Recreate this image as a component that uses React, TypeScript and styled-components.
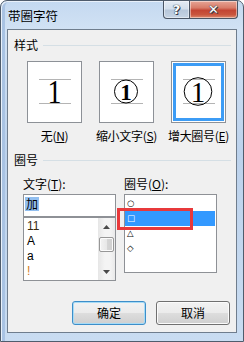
import React from 'react';
import styled, { createGlobalStyle } from 'styled-components';

const GlobalStyle = createGlobalStyle`
  html, body { margin: 0; padding: 0; background: #ffffff; }
  body { font-family: "Noto Sans CJK SC", sans-serif; }
`;

const CJK = `"Noto Sans CJK SC", "Microsoft YaHei", sans-serif`;

// Window frame (Aero glass)
const Window = styled.div`
  width: 244px;
  height: 342px;
  box-sizing: border-box;
  border: 1px solid #4f5c6c;
  border-radius: 7px 7px 0 0;
  background: linear-gradient(180deg, #c4d9f0 0%, #d2e2f4 9%, #bcd2ec 45%, #c9dcf1 100%);
  box-shadow: inset 1px 1px 0 #e9f1fa, inset 4px 0 0 #a9c3e3;
  display: flex;
  flex-direction: column;
  overflow: hidden;
`;

const TitleBar = styled.div`
  height: 28px;
  display: flex;
  align-items: flex-start;
  flex-shrink: 0;
`;

const Title = styled.div`
  padding: 7px 0 0 7px;
  font: 12.5px/16px ${CJK};
  color: #000;
`;

const CaptionButtons = styled.div`
  margin-left: auto;
  margin-right: 5px;
  display: flex;
`;

const CaptionButton = styled.div<{ $close?: boolean }>`
  width: ${p => (p.$close ? 48 : 27)}px;
  height: 18px;
  box-sizing: border-box;
  border: 1px solid #4a5564;
  border-top: none;
  ${p => (p.$close ? 'border-left: none;' : '')}
  border-radius: ${p => (p.$close ? '0 0 4px 0' : '0 0 0 4px')};
  background: ${p =>
    p.$close
      ? 'linear-gradient(180deg, #e6a596 0%, #d87c69 40%, #c34533 55%, #c9553e 80%, #dd8a6d 100%)'
      : 'linear-gradient(180deg, #e3ebf4 0%, #d3dfec 45%, #b7c7da 55%, #c6d4e4 100%)'};
  box-shadow: inset 0 0 0 1px rgba(255, 255, 255, 0.45);
  display: flex;
  align-items: center;
  justify-content: center;
  font: bold 13px/1 "DejaVu Sans", sans-serif;
  color: #ffffff;
  text-shadow: 0 0 1px #2d3440, 0 0 1px #2d3440, 1px 1px 0 #3a4250;
`;

const Client = styled.div`
  position: relative;
  margin: 0 6px 8px 6px;
  flex: 1;
  border: 1px solid #6f7d8d;
  background: #f0f0f0;
  display: flex;
  flex-direction: column;
`;

const SectionHeader = styled.div<{ $top: number }>`
  margin-top: ${p => p.$top}px;
  padding: 0 5px 0 6px;
  height: 16px;
  display: flex;
  align-items: center;
  gap: 5px;
  font: 12px/16px ${CJK};
  color: #000;
`;

const Rule = styled.div`
  flex: 1;
  height: 1px;
  background: #d5dfe5;
`;

const StyleRow = styled.div`
  margin-top: 8px;
  padding-left: 19px;
  display: flex;
  gap: 17px;
`;

const StyleOption = styled.div`
  width: 55px;
  display: flex;
  flex-direction: column;
  align-items: center;
`;

const Preview = styled.div<{ $selected?: boolean }>`
  width: 55px;
  height: 62px;
  box-sizing: border-box;
  border: 1px solid #8d9197;
  background: #ffffff;
  box-shadow: ${p => (p.$selected ? 'inset 0 0 0 1px #ffffff, inset 0 0 0 4px #3c9cf5' : 'none')};
  display: flex;
`;

const OptionLabel = styled.div`
  margin-top: 5px;
  white-space: nowrap;
  font: 12px/16px ${CJK};
  color: #000;
  letter-spacing: -0.3px;
  u { text-decoration-thickness: 1px; text-underline-offset: 1px; }
`;

const Columns = styled.div`
  margin-top: 8px;
  padding-left: 15px;
  display: flex;
  gap: 8px;
`;

const Column = styled.div`
  position: relative;
  width: 93px;
  display: flex;
  flex-direction: column;
`;

const FieldLabel = styled.div`
  font: 12px/16px ${CJK};
  color: #000;
  margin-bottom: 2px;
  u { text-decoration-thickness: 1px; text-underline-offset: 1px; }
`;

const TextBox = styled.div`
  height: 23px;
  box-sizing: border-box;
  border: 1px solid #8e9196;
  background: #ffffff;
  padding: 2px 0 0 1px;
  font: 12px/14px ${CJK};
`;

const Selected = styled.span`
  display: inline-block;
  padding: 0 1px;
  background: #92bff0;
  color: #000;
`;

const ListBox = styled.div<{ $h: number }>`
  height: ${p => p.$h}px;
  box-sizing: border-box;
  border: 1px solid #8e9196;
  background: #ffffff;
  display: flex;
`;

const Items = styled.div<{ $pt: number }>`
  flex: 1;
  padding-top: ${p => p.$pt}px;
  display: flex;
  flex-direction: column;
`;

const Item = styled.div<{ $color?: string }>`
  height: 15px;
  padding-left: 3px;
  font: 12px/15px "Liberation Sans", sans-serif;
  color: ${p => p.$color || '#000'};
`;

const SymbolItem = styled.div<{ $active?: boolean }>`
  height: 15px;
  margin-right: 1px;
  padding-left: 2px;
  font: bold 8.5px/15px "DejaVu Sans", sans-serif;
  color: ${p => (p.$active ? '#ffffff' : '#000')};
  background: ${p => (p.$active ? '#3399ff' : 'transparent')};
`;

const ScrollBar = styled.div`
  width: 17px;
  display: flex;
  flex-direction: column;
  background: linear-gradient(90deg, #e6e6e6, #f4f4f4 40%, #f4f4f4 70%, #e9e9e9);
`;

const ArrowButton = styled.div`
  height: 17px;
  display: flex;
  align-items: center;
  justify-content: center;
`;

const Track = styled.div`
  flex: 1;
  padding-top: 2px;
`;

const Thumb = styled.div`
  margin: 0 1px;
  height: 15px;
  box-sizing: border-box;
  border: 1px solid #979797;
  border-radius: 2px;
  background: linear-gradient(90deg, #f3f3f3 0%, #e8e8e8 50%, #d6d6d6 51%, #cfcfcf 100%);
  box-shadow: inset 0 0 0 1px #fbfbfb;
`;

const Annotation = styled.div`
  position: absolute;
  left: -7px;
  top: 32px;
  width: 76px;
  height: 22px;
  box-sizing: border-box;
  border: 3px solid #e8393b;
  pointer-events: none;
`;

const ButtonRow = styled.div`
  margin-top: 20px;
  padding-right: 6px;
  display: flex;
  justify-content: flex-end;
  gap: 10px;
`;

const PushButton = styled.button<{ $default?: boolean }>`
  width: 74px;
  height: 24px;
  box-sizing: border-box;
  padding: 0;
  border: 1px solid ${p => (p.$default ? '#3d8ec9' : '#707070')};
  border-radius: 3px;
  background: linear-gradient(180deg, #f2f2f2 0%, #ebebeb 48%, #dddddd 52%, #cfcfcf 100%);
  box-shadow: inset 0 0 0 1px ${p => (p.$default ? '#a6dbf6' : '#fbfbfb')};
  font: 12px/16px ${CJK};
  color: #000;
`;

const Guides = () => (
  <>
    <line x1="11" y1="17.5" x2="43" y2="17.5" stroke="#b4b4b4" strokeWidth="1" />
    <line x1="11" y1="41.5" x2="43" y2="41.5" stroke="#b4b4b4" strokeWidth="1" />
  </>
);

const PreviewPlain = () => (
  <svg width="53" height="60" viewBox="0 0 53 60">
    <Guides />
    <text
      x="31.2"
      y="41"
      textAnchor="middle"
      fontFamily="Liberation Serif"
      fontSize="33"
      fill="#000"
      transform="scale(0.85 1)"
    >
      1
    </text>
  </svg>
);

const PreviewShrink = () => (
  <svg width="53" height="60" viewBox="0 0 53 60">
    <Guides />
    <circle cx="26" cy="29.5" r="11.5" fill="none" stroke="#000" strokeWidth="1" />
    <text x="26" y="37.5" textAnchor="middle" fontFamily="Liberation Serif" fontSize="23" fontWeight="bold" fill="#000">1</text>
  </svg>
);

const PreviewEnlarge = () => (
  <svg width="53" height="60" viewBox="0 0 53 60">
    <Guides />
    <circle cx="26" cy="29.5" r="13.8" fill="none" stroke="#000" strokeWidth="1" />
    <text x="26" y="40" textAnchor="middle" fontFamily="Liberation Serif" fontSize="29" fill="#000">1</text>
  </svg>
);

const Arrow = ({ down }: { down?: boolean }) => (
  <svg width="7" height="4" viewBox="0 0 7 4">
    <path d={down ? 'M0 0 H7 L3.5 4 Z' : 'M0 4 H7 L3.5 0 Z'} fill="#4a4a4a" />
  </svg>
);

export default function App() {
  return (
    <>
      <GlobalStyle />
      <Window>
        <TitleBar>
          <Title>带圈字符</Title>
          <CaptionButtons>
            <CaptionButton>?</CaptionButton>
            <CaptionButton $close>✕</CaptionButton>
          </CaptionButtons>
        </TitleBar>
        <Client>
          <SectionHeader $top={7}>
            <span>样式</span>
            <Rule />
          </SectionHeader>
          <StyleRow>
            <StyleOption>
              <Preview><PreviewPlain /></Preview>
              <OptionLabel>无(<u>N</u>)</OptionLabel>
            </StyleOption>
            <StyleOption>
              <Preview><PreviewShrink /></Preview>
              <OptionLabel>缩小文字(<u>S</u>)</OptionLabel>
            </StyleOption>
            <StyleOption>
              <Preview $selected><PreviewEnlarge /></Preview>
              <OptionLabel>增大圈号(<u>E</u>)</OptionLabel>
            </StyleOption>
          </StyleRow>
          <SectionHeader $top={8}>
            <span>圈号</span>
            <Rule />
          </SectionHeader>
          <Columns>
            <Column>
              <FieldLabel>文字(<u>T</u>):</FieldLabel>
              <TextBox><Selected>加</Selected></TextBox>
              <ListBox $h={64}>
                <Items $pt={1}>
                  <Item $color="#3a2a10">11</Item>
                  <Item>A</Item>
                  <Item>a</Item>
                  <Item $color="#d07a1a">!</Item>
                </Items>
                <ScrollBar>
                  <ArrowButton><Arrow /></ArrowButton>
                  <Track><Thumb /></Track>
                  <ArrowButton><Arrow down /></ArrowButton>
                </ScrollBar>
              </ListBox>
            </Column>
            <Column>
              <FieldLabel>圈号(<u>O</u>):</FieldLabel>
              <ListBox $h={79}>
                <Items $pt={1}>
                  <SymbolItem>○</SymbolItem>
                  <SymbolItem $active>□</SymbolItem>
                  <SymbolItem>△</SymbolItem>
                  <SymbolItem>◇</SymbolItem>
                </Items>
              </ListBox>
              <Annotation />
            </Column>
          </Columns>
          <ButtonRow>
            <PushButton $default>确定</PushButton>
            <PushButton>取消</PushButton>
          </ButtonRow>
        </Client>
      </Window>
    </>
  );
}
